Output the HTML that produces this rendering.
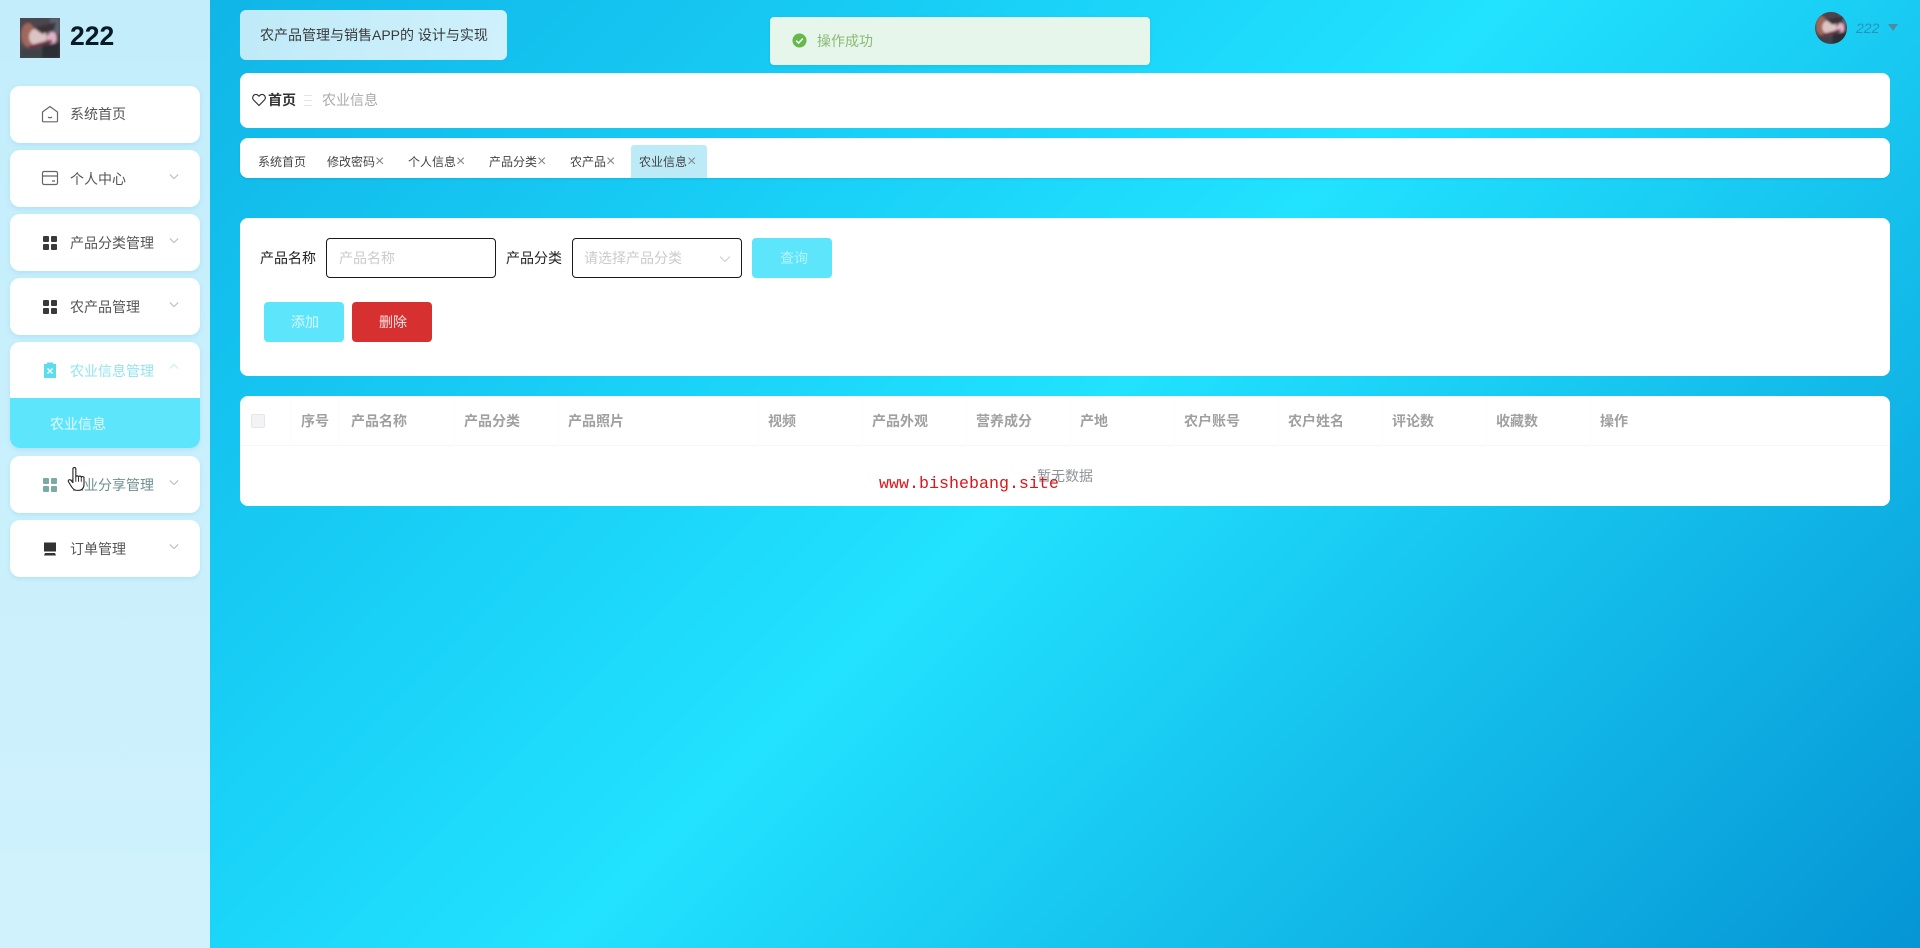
<!DOCTYPE html>
<html lang="zh">
<head>
<meta charset="utf-8">
<title>农业信息</title>
<style>
html,body{margin:0;padding:0;width:1920px;height:948px;overflow:hidden}
body{position:relative;font-family:"Liberation Sans","Noto Sans CJK SC",sans-serif;font-size:14px;color:#333;background:linear-gradient(135deg,#0eaee2 0%,#17cbf4 30%,#21e2ff 52.5%,#17c6ef 70%,#0595d5 100%)}
div,span,svg{position:absolute;box-sizing:border-box}
.t{white-space:nowrap;line-height:20px}
#side{left:0;top:0;width:210px;height:948px;background:linear-gradient(180deg,#c3edfb 0%,#c9f0fc 50%,#d0f2fd 100%)}
.m{left:10px;width:190px;height:56.5px;background:#fff;border-radius:10px;box-shadow:0 2px 4px rgba(120,190,220,.25)}
.mt{left:60px;top:19px;color:#555;white-space:nowrap;line-height:20px}
.ic{left:31px;top:20px;width:18px;height:18px}
.ch{left:159px;top:23px;width:10px;height:7px}
.card{background:#fff;border-radius:8px}
.tab{top:154px;font-size:12px;color:#444;white-space:nowrap;line-height:16px}
.x{position:static!important;color:#888;font-size:16px;line-height:0}
.th{top:411px;color:#a0a0a0;font-weight:bold;white-space:nowrap;line-height:20px;font-size:14px}
.sep{top:396px;width:1px;height:50px;background:#fbfbfb}
.btn{height:40px;width:80px;border-radius:4px;color:#dcf9fe;text-align:center;line-height:40px;background:#5ce5fb;padding-left:2px}
.inp{height:40px;width:170px;border:1px solid #1a1a1a;border-radius:4px;background:#fff;color:#cbcbcb;line-height:38px;padding-left:12px}
</style>
</head>
<body>
<div id="side">
  <svg style="left:20px;top:18px" width="40" height="40" viewBox="0 0 40 40"><defs><filter id="b1"><feGaussianBlur stdDeviation="1.3"/></filter></defs><rect width="40" height="40" fill="#504650"/><g filter="url(#b1)"><rect x="0" y="0" width="40" height="10" fill="#4c444e"/><rect x="30" y="0" width="10" height="16" fill="#5c6270"/><ellipse cx="8" cy="17" rx="7" ry="12" fill="#a0685c"/><ellipse cx="18" cy="19" rx="9" ry="9" fill="#dcc4c4"/><path d="M14 10 L36 4 L34 12 L22 16Z" fill="#3a3038"/><ellipse cx="32" cy="20" rx="5" ry="6" fill="#e2b4c6"/><path d="M10 29 L32 23" stroke="#702c40" stroke-width="3"/><rect x="0" y="31" width="40" height="9" fill="#3d4249"/><path d="M22 28 L40 24 V40 H22Z" fill="#2a2e36"/></g></svg>
  <span class="t" style="left:70px;top:21px;font-size:26.5px;font-weight:bold;color:#0a1a26;line-height:30px">222</span>

  <div class="m" style="top:86px">
    <svg class="ic" style="top:19px" viewBox="0 0 18 18" fill="none" stroke="#666" stroke-width="1.2"><path d="M1.5 7 L9 1.5 L16.5 7 V16 a.8.8 0 0 1-.8.8 H2.3 a.8.8 0 0 1-.8-.8Z"/><path d="M7 12 q2 1.6 4 0" /></svg>
    <span class="mt" style="top:18px">系统首页</span>
  </div>
  <div class="m" style="top:150px">
    <svg class="ic" style="top:19px" viewBox="0 0 18 18" fill="none" stroke="#666" stroke-width="1.2"><rect x="1.5" y="2.5" width="15" height="13" rx="1.5"/><path d="M1.5 7 H16.5 M11 12 H14"/></svg>
    <span class="mt">个人中心</span>
    <svg class="ch" viewBox="0 0 12 8" fill="none" stroke="#aaa" stroke-width="1"><path d="M1 1.5 L6 6.5 L11 1.5"/></svg>
  </div>
  <div class="m" style="top:214px">
    <svg class="ic" viewBox="0 0 18 18" fill="#3a3a3a"><rect x="2" y="2" width="6" height="6" rx="1"/><rect x="10" y="2" width="6" height="6" rx="1"/><rect x="2" y="10" width="6" height="6" rx="1"/><rect x="10" y="10" width="6" height="6" rx="1"/></svg>
    <span class="mt">产品分类管理</span>
    <svg class="ch" viewBox="0 0 12 8" fill="none" stroke="#aaa" stroke-width="1"><path d="M1 1.5 L6 6.5 L11 1.5"/></svg>
  </div>
  <div class="m" style="top:278px">
    <svg class="ic" viewBox="0 0 18 18" fill="#3a3a3a"><rect x="2" y="2" width="6" height="6" rx="1"/><rect x="10" y="2" width="6" height="6" rx="1"/><rect x="2" y="10" width="6" height="6" rx="1"/><rect x="10" y="10" width="6" height="6" rx="1"/></svg>
    <span class="mt">农产品管理</span>
    <svg class="ch" viewBox="0 0 12 8" fill="none" stroke="#aaa" stroke-width="1"><path d="M1 1.5 L6 6.5 L11 1.5"/></svg>
  </div>
  <div class="m" style="top:342px;height:106px;overflow:hidden">
    <svg class="ic" style="top:19px" viewBox="0 0 18 18"><path d="M3 3 H6 V1.5 H12 V3 H15 V17 H3Z" fill="#5cdcec"/><path d="M6.5 7.5 L11.5 12.5 M11.5 7.5 L6.5 12.5" stroke="#fff" stroke-width="1.3"/></svg>
    <span class="mt" style="color:#93e3ee">农业信息管理</span>
    <svg class="ch" style="top:21px" viewBox="0 0 12 8" fill="none" stroke="#b8ecf3" stroke-width="1"><path d="M1 6.5 L6 1.5 L11 6.5"/></svg>
    <div style="left:0;top:56px;width:190px;height:50px;background:#5ce5fb"></div>
    <span class="t" style="left:40px;top:72px;color:#e8fbfe">农业信息</span>
  </div>
  <div class="m" style="top:456px">
    <svg class="ic" viewBox="0 0 18 18" fill="#7aa9a6"><rect x="2" y="2" width="6" height="6" rx="1"/><rect x="10" y="2" width="6" height="6" rx="1"/><rect x="2" y="10" width="6" height="6" rx="1"/><rect x="10" y="10" width="6" height="6" rx="1"/></svg>
    <span class="mt" style="color:#6f8f93">农业分享管理</span>
    <svg class="ch" viewBox="0 0 12 8" fill="none" stroke="#aaa" stroke-width="1"><path d="M1 1.5 L6 6.5 L11 1.5"/></svg>
  </div>
  <div class="m" style="top:520px">
    <svg class="ic" viewBox="0 0 18 18" fill="#333"><path d="M3 2.5 H15 V11.5 H3Z"/><path d="M4 13 H14 L15 15.5 H3Z"/></svg>
    <span class="mt">订单管理</span>
    <svg class="ch" viewBox="0 0 12 8" fill="none" stroke="#aaa" stroke-width="1"><path d="M1 1.5 L6 6.5 L11 1.5"/></svg>
  </div>
  <svg style="left:67px;top:466px;z-index:5" width="20" height="26" viewBox="0 0 22 28"><path d="M6.5 3 a1.6 1.6 0 0 1 3.2 0 V12 a1.5 1.5 0 0 1 3 0 a1.5 1.5 0 0 1 3 .5 a1.5 1.5 0 0 1 3 .8 V20 c0 3.5-2 6.5-6 6.5 H11 c-3 0-4.5-1.5-6-4 L1.6 17 c-1-1.8 1.5-3 2.8-1.5 L6.5 18Z" fill="#fff" stroke="#222" stroke-width="1.2" stroke-linejoin="round"/><path d="M9.7 12 V17 M12.7 12.5 V17 M15.7 13 V17" stroke="#222" fill="none" stroke-width="1"/></svg>
</div>

<div style="left:240px;top:10px;width:267px;height:50px;background:linear-gradient(100deg,#c0eaf8,#cff1fc);border-radius:6px"></div>
<span class="t" style="left:260px;top:25px;color:#3a3a3a">农产品管理与销售APP的 设计与实现</span>

<div style="left:770px;top:17px;width:380px;height:48px;background:#e6f6ea;border-radius:4px;box-shadow:0 1px 4px rgba(0,0,0,.06)"></div>
<svg style="left:792px;top:33px" width="15" height="15" viewBox="0 0 15 15"><circle cx="7.5" cy="7.5" r="7" fill="#67b84a"/><path d="M4.2 7.6 L6.6 10 L10.8 5.6" stroke="#fff" stroke-width="1.5" fill="none"/></svg>
<span class="t" style="left:817px;top:31px;color:#8aba76">操作成功</span>

<svg style="left:1815px;top:12px" width="32" height="32" viewBox="0 0 40 40"><defs><clipPath id="c"><circle cx="20" cy="20" r="20"/></clipPath><filter id="b2"><feGaussianBlur stdDeviation="1.3"/></filter></defs><g clip-path="url(#c)"><rect width="40" height="40" fill="#504650"/><g filter="url(#b2)"><rect x="0" y="0" width="40" height="10" fill="#4c444e"/><rect x="30" y="0" width="10" height="16" fill="#5c6270"/><ellipse cx="8" cy="17" rx="7" ry="12" fill="#a0685c"/><ellipse cx="18" cy="19" rx="9" ry="9" fill="#dcc4c4"/><path d="M14 10 L36 4 L34 12 L22 16Z" fill="#3a3038"/><ellipse cx="32" cy="20" rx="5" ry="6" fill="#e2b4c6"/><path d="M10 29 L32 23" stroke="#702c40" stroke-width="3"/><rect x="0" y="31" width="40" height="9" fill="#3d4249"/><path d="M22 28 L40 24 V40 H22Z" fill="#2a2e36"/></g></g></svg>
<span class="t" style="left:1856px;top:18px;color:#2f8fbb;font-style:italic">222</span>
<svg style="left:1888px;top:24px" width="10" height="7" viewBox="0 0 10 7"><path d="M0 0 H10 L5 7Z" fill="#4d8ba5"/></svg>

<div class="card" style="left:240px;top:73px;width:1650px;height:55px"></div>
<svg style="left:252px;top:93px" width="14" height="14" viewBox="0 0 14 14" fill="none" stroke="#333" stroke-width="1.2"><path d="M7 12.5 L1.6 7 a3.2 3.2 0 0 1 4.6-4.6 L7 3.2 l.8-.8 a3.2 3.2 0 0 1 4.6 4.6Z"/></svg>
<span class="t" style="left:268px;top:90px;color:#333;font-weight:bold">首页</span>
<svg style="left:304px;top:95px" width="8" height="12" viewBox="0 0 8 12" stroke="#e4e4e4"><path d="M0 .5H8M0 5.5H8M0 10.5H8"/></svg>
<span class="t" style="left:322px;top:90px;color:#aaa">农业信息</span>

<div class="card" style="left:240px;top:138px;width:1650px;height:40px;box-shadow:0 1px 2px rgba(0,80,120,.15)"></div>
<span class="tab" style="left:258px">系统首页</span>
<span class="tab" style="left:327px">修改密码<span class="x">×</span></span>
<span class="tab" style="left:408px">个人信息<span class="x">×</span></span>
<span class="tab" style="left:489px">产品分类<span class="x">×</span></span>
<span class="tab" style="left:570px">农产品<span class="x">×</span></span>
<div style="left:631px;top:145px;width:76px;height:33px;background:#bdeaf7;border-radius:3px 3px 0 0"></div>
<span class="tab" style="left:639px">农业信息<span class="x">×</span></span>

<div class="card" style="left:240px;top:218px;width:1650px;height:158px"></div>
<span class="t" style="left:260px;top:248px;color:#222">产品名称</span>
<div class="inp" style="left:326px;top:238px">产品名称</div>
<span class="t" style="left:506px;top:248px;color:#222">产品分类</span>
<div class="inp" style="left:572px;top:238px;padding-left:11px">请选择产品分类</div>
<svg style="left:719px;top:255px" width="12" height="8" viewBox="0 0 12 8" fill="none" stroke="#ccc" stroke-width="1"><path d="M1 1.5 L6 6.5 L11 1.5"/></svg>
<div class="btn" style="left:752px;top:238px;color:#b8f3fd;padding-left:4px">查询</div>
<div class="btn" style="left:264px;top:302px">添加</div>
<div class="btn" style="left:352px;top:302px;background:#d63031;color:#fbe4e4">删除</div>

<div class="card" style="left:240px;top:396px;width:1650px;height:110px"></div>
<div style="left:240px;top:445px;width:1650px;height:1px;background:#f6f6f6"></div>
<div style="left:251px;top:414px;width:14px;height:14px;background:#f3f3f5;border:1px solid #e6e6e8;border-radius:2px"></div>
<div class="sep" style="left:290px"></div><div class="sep" style="left:338px"></div><div class="sep" style="left:454px"></div><div class="sep" style="left:558px"></div><div class="sep" style="left:758px"></div><div class="sep" style="left:862px"></div><div class="sep" style="left:966px"></div><div class="sep" style="left:1070px"></div><div class="sep" style="left:1174px"></div><div class="sep" style="left:1278px"></div><div class="sep" style="left:1382px"></div><div class="sep" style="left:1486px"></div><div class="sep" style="left:1590px"></div>
<span class="th" style="left:301px">序号</span>
<span class="th" style="left:351px">产品名称</span>
<span class="th" style="left:464px">产品分类</span>
<span class="th" style="left:568px">产品照片</span>
<span class="th" style="left:768px">视频</span>
<span class="th" style="left:872px">产品外观</span>
<span class="th" style="left:976px">营养成分</span>
<span class="th" style="left:1080px">产地</span>
<span class="th" style="left:1184px">农户账号</span>
<span class="th" style="left:1288px">农户姓名</span>
<span class="th" style="left:1392px">评论数</span>
<span class="th" style="left:1496px">收藏数</span>
<span class="th" style="left:1600px">操作</span>
<span class="t" style="left:1037px;top:466px;color:#909399">暂无数据</span>
<span class="t" style="left:879px;top:474.5px;color:#d8161c;font-family:'Liberation Mono',monospace;font-size:16.67px;line-height:20px">www.bishebang.site</span>
</body>
</html>
